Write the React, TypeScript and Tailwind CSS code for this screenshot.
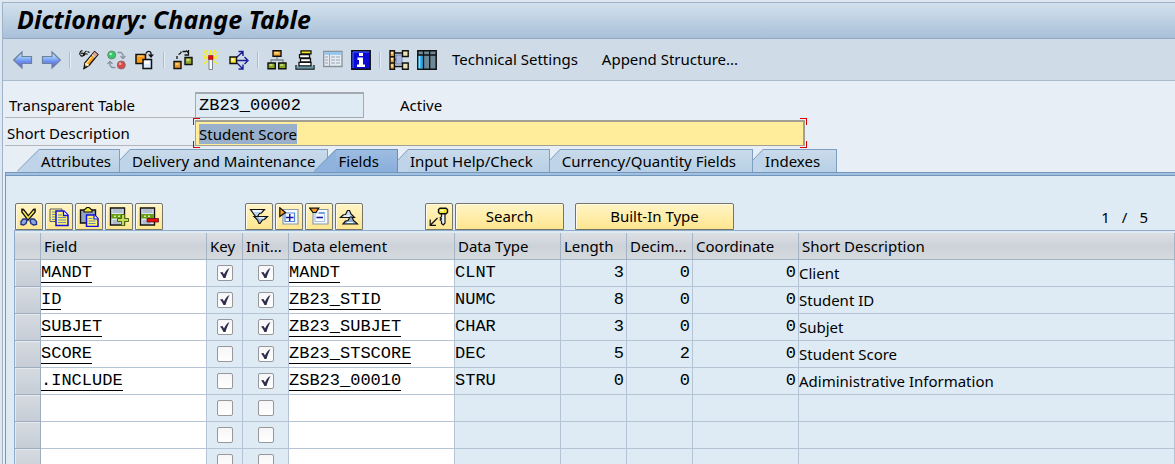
import { useEffect, useRef, type ReactNode } from "react";

function Icon({ children, className = "" }: { children: ReactNode; className?: string }) {
  return (
    <svg viewBox="0 0 20 20" className={`h-5 w-5 shrink-0 ${className}`} fill="none" aria-hidden="true">
      {children}
    </svg>
  );
}

const BackIcon = () => (
  <Icon>
    <defs>
      <linearGradient id="arrow" x1="0" y1="0" x2="0" y2="1">
        <stop offset="0.2" stopColor="#a8e0fb" />
        <stop offset="0.6" stopColor="#6c8df0" />
        <stop offset="1" stopColor="#5a66e4" />
      </linearGradient>
    </defs>
    <path d="M.7 10 9 2v4.500h9.500v7H9V18z" fill="url(#arrow)" stroke="#6f7f9c" strokeWidth="1.200" />
  </Icon>
);

const ForwardIcon = () => (
  <Icon>
    <path d="M19.300 10 11 2v4.500H1.500v7H11V18z" fill="url(#arrow)" stroke="#6f7f9c" strokeWidth="1.200" />
  </Icon>
);

const DisplayChangeIcon = () => (
  <Icon>
    <path d="M3.500.7C1.500 1 .5 2.500 1 5M2 3.500c1.500-1 3 0 2.500 1.500S2 6.500 1.500 5M5 4c.5-1 1-2.500 2.500-3M5 6c0-2 2.500-3 3.500-1.500M8.500 1.500l2 1" stroke="#111" strokeWidth="1.200" />
    <path d="M15.500 1.500 19 4.500 10 15.500 5 18.500l.8-5.500z" fill="#f8a020" stroke="#111" strokeWidth="1.200" />
    <path d="M14 3.200 15.600 1.800 18.600 4.400 17.300 6z" fill="#e9a0a0" />
    <path d="M13 4.500 16.300 7.200" stroke="#c8d4f0" strokeWidth="1.500" />
    <path d="M12.500 7 7.500 13.200" stroke="#ffe08a" strokeWidth="1.300" />
    <path d="M6.200 13.500 9.500 15.500" stroke="#fff" strokeWidth="1.500" />
    <path d="M5.500 16 8 17.200 4.500 19z" fill="#111" />
  </Icon>
);

const ActiveInactiveIcon = () => (
  <Icon>
    <circle cx="4.700" cy="5" r="4" fill="#35c968" stroke="#648d75" />
    <circle cx="3.700" cy="4" r="1.300" fill="#a9f3c2" />
    <circle cx="14.300" cy="15" r="4" fill="#d84c4c" stroke="#9a6666" />
    <circle cx="13.200" cy="13.800" r="1.300" fill="#f5b0a8" />
    <path d="M10.500 2.500H14l2 2V8M13.500 6 16 8.500 18.500 6" stroke="#87939e" strokeWidth="1.300" />
    <path d="M8.500 17.500H5l-2-2V12M.5 14 3 11.500 5.500 14" stroke="#87939e" strokeWidth="1.300" />
  </Icon>
);

const OtherObjectIcon = () => (
  <Icon>
    <path d="M1 4.500h9.500v9H1z" fill="#fb9a14" stroke="#111" strokeWidth="1.500" />
    <path d="M2.500 6h6" stroke="#ffd080" />
    <path d="M8 9.500h8.500v9H8z" fill="#dceaff" stroke="#111" strokeWidth="1.500" />
    <path d="M9.500 11h5v3h-5z" fill="#fff" />
    <path d="M11 3.500C12 1 15 .5 16 3v3" stroke="#111" strokeWidth="1.300" />
    <path d="M13 4.500h6L16 8z" fill="#111" />
  </Icon>
);

const CheckObjectIcon = () => (
  <Icon>
    <path d="M1 11.500h7v7H1z" fill="#ef9624" stroke="#111" strokeWidth="1.400" />
    <path d="M2.500 13h3v2h-3z" fill="#ffd27a" />
    <path d="M12 7.500h7v7h-7z" fill="#97a831" stroke="#111" strokeWidth="1.400" />
    <path d="M13.500 9h3v2h-3z" fill="#d2dd8a" />
    <path d="M4 9V6M5.500 4.500 8 3M8 3V1.500M9.500 1.500H13M13 .5l2.500 2.500M15.500 0v5h-4" stroke="#111" strokeWidth="1.300" />
  </Icon>
);

const ActivateIcon = () => (
  <Icon>
    <path d="M9.500 0v5M2.500 1.500 7 5.500M16.500 1.500 12 5.500M2 8h5M12 8h5M3 14l4-4M16 14l-4-4M5 0l2 3.500M14 0l-2 3.500M1.500 5.500 6 7M17.500 5.500 13 7" stroke="#f6ee25" strokeWidth="1.300" />
    <path d="M8 8h3.500v11.500H8z" fill="#f7f9fb" stroke="#7a8690" />
    <path d="M7.500 5.500h4.500v4H7.500z" fill="#e80d0d" stroke="#9b1010" strokeWidth=".6" />
  </Icon>
);

const WhereUsedIcon = () => (
  <Icon>
    <path d="M7.500 7.500 13.500 2M7.500 10.500H18M7.500 12.500 13.500 18.500M9.500 1.500h4.500V6M9.500 19h4.500v-4.500M15.500 7l3.500 3.500-3.500 3.500" stroke="#1c1c96" strokeWidth="1.400" />
    <path d="M1 7h6.500v6.500H1z" fill="#f7e92a" stroke="#111" strokeWidth="1.400" />
    <path d="M2.500 8.500h2v2h-2z" fill="#fff" />
  </Icon>
);

const HierarchyIcon = () => (
  <Icon>
    <path d="M10 6v4M4 12.500V10h12v2.500" stroke="#7b8791" strokeWidth="1.300" />
    <path d="M6 .7h8v5.600H6z" fill="#f7a92c" stroke="#111" strokeWidth="1.400" />
    <path d="M7.500 2h4v1.500h-4z" fill="#ffe196" />
    <path d="M1 13h7.300v5.700H1zM11.700 13H19v5.700h-7.300z" fill="#88a622" stroke="#111" strokeWidth="1.400" />
    <path d="M2.500 14.300h3v1.500h-3zM13.200 14.300h3v1.500h-3z" fill="#d3e28a" />
  </Icon>
);

const StackIcon = () => (
  <Icon>
    <path d="M1 15v4h18v-4" fill="#9fc4d2" stroke="#111" strokeWidth="1.300" />
    <path d="M1.500 17.500h17" stroke="#6599ab" strokeWidth="2" />
    <path d="M4 12.300h12v3.500H4z" fill="#fff" stroke="#111" strokeWidth="1.300" />
    <path d="M5.500 8.500h10v3.300h-10z" fill="#fff" stroke="#111" strokeWidth="1.300" />
    <path d="M4.500 4.600h10v3.300h-10z" fill="#fff" stroke="#111" strokeWidth="1.300" />
    <path d="M6 .9h10v3H6z" fill="#f6e51e" stroke="#111" strokeWidth="1.300" />
  </Icon>
);

const ContentsIcon = () => (
  <Icon>
    <path d="M.7 1.500h18.300v15H.7z" fill="#e6ebf1" stroke="#87929d" strokeWidth="1.300" />
    <path d="M1.500 3.500h17" stroke="#8cc4f0" strokeWidth="2.500" />
    <path d="M6.500 4v12" stroke="#9ca8b4" />
    <path d="M2 7h3M2 10h3M2 13h3M8 7h4M13 7h4M8 10h4M13 10h4M8 13h4M13 13h4" stroke="#b4bcc5" strokeWidth="1.500" />
  </Icon>
);

const InfoIcon = () => (
  <Icon>
    <path d="M.8.800h18.400v18.400H.8z" fill="#0b0bd6" stroke="#111" strokeWidth="1.500" />
    <path d="M2 18V2h16" stroke="#4a6bff" />
    <path d="M8 3h4v3H8zM6.500 7.500H12v7h2V17H6v-2.500h2V10H6.500z" fill="#fff" />
  </Icon>
);

const RelationIcon = () => (
  <Icon>
    <path d="M4 3h10M4 16.500h10M5 9.500h4" stroke="#111" strokeWidth="1.500" />
    <path d="M7 5h6v9H7z" fill="#a6b9dc" stroke="#7285a8" />
    <path d="M1 .8h4.500v18.400H1z" fill="#efa73f" stroke="#111" strokeWidth="1.400" />
    <path d="M1 6.800h4.500M1 13h4.500" stroke="#111" strokeWidth="1.400" />
    <path d="M2 2h2v2H2zM2 8h2v2H2zM2 14.500h2v2H2z" fill="#ffe3a0" />
    <path d="M13.500.8h5.700v5.700h-5.700zM13.500 13h5.700v6.200h-5.700z" fill="#eae3b6" stroke="#111" strokeWidth="1.400" />
  </Icon>
);

const TableIcon = () => (
  <Icon>
    <path d="M.8.800h18.400v18.400H.8z" fill="#6d8997" stroke="#111" strokeWidth="1.500" />
    <path d="M1.500 5H6v13.500H1.500z" fill="#27a8e8" />
    <path d="M2.500 5v13" stroke="#8fe0ff" strokeWidth="1.500" />
    <path d="M6.500 1v18M12.700 1v18M1 5h18" stroke="#111" strokeWidth="1.300" />
  </Icon>
);

const CutIcon = () => (
  <Icon>
    <path d="M3 1.500V5l6.500 8.500M16 1.500V5L8.500 13.500M4 2l7 9M15 2 8 11" stroke="#111" strokeWidth="1.600" />
    <path d="M4 4l5.500 7.500M15 4 9.500 10.500" stroke="#f5e93a" strokeWidth="1.400" />
    <path d="M2 14.500 4 12h3l1 1.500-1 3L4.500 18 2 17.500zM11 13.500l1-1.500h3l2.500 2.500v3L14.500 18 12 16.500z" fill="#8fa6d8" stroke="#22338c" strokeWidth="1.400" />
  </Icon>
);

const CopyIcon = () => (
  <Icon>
    <path d="M1 2h12v12.500H1z" fill="#fff16a" stroke="#55617c" />
    <path d="M3 5h4M3 7.500h4M3 10h4M3 12.500h4" stroke="#6a88b4" />
    <path d="M7 4h8l4 4v10.500H7z" fill="#fff16a" stroke="#1010e0" strokeWidth="1.500" />
    <path d="M14.500 4v4.500H19" fill="#fff" stroke="#1010e0" strokeWidth="1.300" />
    <path d="M9 8h4M9 10.500h8M9 13h8M9 15.500h8" stroke="#6a88b4" />
  </Icon>
);

const PasteIcon = () => (
  <Icon>
    <path d="M1.500 3h15v13h-15z" fill="#96a4be" stroke="#111" strokeWidth="1.400" />
    <path d="M5 5V3l3-2.500h2L13 3v2z" fill="#f4e530" stroke="#111" strokeWidth="1.200" />
    <path d="M7.500 8h8l3.500 3.500v8H7.500z" fill="#fff16a" stroke="#1010e0" strokeWidth="1.500" />
    <path d="M15 8v4h4" fill="#fff" stroke="#1010e0" strokeWidth="1.200" />
    <path d="M9.500 11.500h4M9.500 14h7M9.500 16.500h7" stroke="#6a88b4" />
  </Icon>
);

const ListBody = () => (
  <>
    <path d="M1.500 1h14v17h-14z" fill="#dfe6ef" stroke="#111" strokeWidth="1.400" />
    <path d="M3.500 3h10M3.500 5h10M3.500 14h8M3.500 16h8" stroke="#8492b0" strokeWidth="1.200" />
    <path d="M2.200 7h12.600v4.500H2.200z" fill="#679d12" />
    <path d="M5 9.200h2M9 9.200h2" stroke="#d4ec9a" strokeWidth="1.600" />
  </>
);

const InsertRowIcon = () => (
  <Icon>
    <ListBody />
    <path d="M12.500 7.500h3v4h4v3h-4v4h-3v-4h-4v-3h4z" fill="#c3dc5b" stroke="#4e6512" />
  </Icon>
);

const DeleteRowIcon = () => (
  <Icon>
    <ListBody />
    <path d="M8 11.500h11.500V15H8z" fill="#e90d0d" stroke="#5c1010" strokeWidth=".8" />
  </Icon>
);

const ExpandAllIcon = () => (
  <Icon>
    <path d="M5 9.500h13.500l-3 3-2 .5-2.500 3.500H10L8.500 13z" fill="#9bbcdd" stroke="#111" strokeWidth="1.200" />
    <path d="M1.500 2.500h14l-3 3.500-2 .5L8.500 9.500h-2z" fill="#b9d4ee" stroke="#111" strokeWidth="1.200" />
    <path d="M4 4h8.500M10 10.800h5" stroke="#fff" strokeWidth="1.300" />
  </Icon>
);

const ExpandNodeIcon = () => (
  <Icon>
    <path d="M4 2.500h15v14.500H4z" fill="#f7fbff" stroke="#8b98a8" strokeWidth="1.200" />
    <path d="M6 6h9.500v8.500H6z" fill="#fff" stroke="#4c86d8" strokeWidth="1.200" />
    <path d="M7 10.500h7.500M10.700 7v7" stroke="#1515a0" strokeWidth="1.500" />
    <path d="M.8.800 6.500 5.500.8 9.500z" fill="#f59b1f" stroke="#111" strokeWidth="1.200" />
  </Icon>
);

const CollapseNodeIcon = () => (
  <Icon>
    <path d="M4 2.500h15v14.500H4z" fill="#f7fbff" stroke="#8b98a8" strokeWidth="1.200" />
    <path d="M6 6h9.500v8.500H6z" fill="#fff" stroke="#a5c4ea" strokeWidth="1.200" />
    <path d="M10 6h5.500" stroke="#4c86d8" strokeWidth="1.400" />
    <path d="M7.500 10.500h6.500" stroke="#1515a0" strokeWidth="1.600" />
    <path d="M.8 1.200h9L7 5.500H4z" fill="#f59b1f" stroke="#111" strokeWidth="1.200" />
  </Icon>
);

const CollapseAllIcon = () => (
  <Icon>
    <path d="M1.500 10.500 4 8l2.500-.5L8.500 3.500h2l1.500 3.500 3.500 3.500z" fill="#c6dcf2" stroke="#111" strokeWidth="1.200" />
    <path d="M4 17l2.500-3 2.500-.5 2-3.500h2l1.500 3.500 4 3.500z" fill="#8fb2d8" stroke="#111" strokeWidth="1.200" />
    <path d="M5 9h6M8 15.500h6" stroke="#fff" strokeWidth="1.200" />
  </Icon>
);

const KeyIcon = () => (
  <Icon>
    <path d="M12.500 6.500h3.500v9.500L14.300 18l-1.800-1.500V14l-1.300-1 1.300-1-1.300-1.200 1.300-1z" fill="#eef2f8" stroke="#111" strokeWidth="1.200" />
    <path d="M11 1.200h6L18.500 2.500v3L17 6.800h-6L9.500 5.500v-3z" fill="#f6e52a" stroke="#111" strokeWidth="1.400" />
    <path d="M11.500 3.500h3" stroke="#fff" strokeWidth="1.500" />
    <path d="M8.500 11 1.500 18M1.200 12.500v5.800H7" stroke="#111" strokeWidth="1.200" />
  </Icon>
);

const toolGroups = [
  [
    ["Back", BackIcon],
    ["Forward", ForwardIcon],
  ],
  [
    ["Display / Change", DisplayChangeIcon],
    ["Active / Inactive", ActiveInactiveIcon],
    ["Other Object", OtherObjectIcon],
  ],
  [
    ["Check", CheckObjectIcon],
    ["Activate", ActivateIcon],
    ["Where-Used List", WhereUsedIcon],
  ],
  [
    ["Display Object List", HierarchyIcon],
    ["Display Navigation Window", StackIcon],
    ["Contents", ContentsIcon],
    ["Help", InfoIcon],
  ],
  [
    ["Graphic", RelationIcon],
    ["Table View", TableIcon],
  ],
] as const;

function Toolbar() {
  return (
    <div className="flex h-[42px] items-center gap-2 border-b border-[#a9bccf] bg-[#cfdce7] pl-2.5">
      {toolGroups.map((group, g) => (
        <div key={g} className="flex items-center gap-2">
          {g > 0 && <span className="h-4 w-0.5 border-l border-[#9dbde0] bg-[#e4eef7]" />}
          {group.map(([label, Glyph]) => (
            <button key={label} type="button" aria-label={label} className="block">
              <Glyph />
            </button>
          ))}
        </div>
      ))}
      <button type="button" className="ml-[7px]">Technical Settings</button>
      <button type="button" className="ml-4">Append Structure...</button>
    </div>
  );
}

function Corners() {
  return (
    <>
      <span className="absolute -left-0.5 -top-0.5 h-[7px] w-[7px] border-l border-t border-[#e00000]" />
      <span className="absolute -bottom-0.5 -left-0.5 h-[7px] w-[7px] border-b border-l border-[#e00000]" />
      <span className="absolute -right-0.5 -top-0.5 h-[7px] w-[7px] border-r border-t border-[#e00000]" />
      <span className="absolute -bottom-0.5 -right-0.5 h-[7px] w-[7px] border-b border-r border-[#e00000]" />
    </>
  );
}

function HeaderForm() {
  const description = useRef<HTMLInputElement>(null);
  useEffect(() => {
    description.current?.focus();
    description.current?.select();
  }, []);
  return (
    <form className="flex flex-col gap-0.5 pl-0.5 pt-[11px]">
      <div className="flex h-[26px]">
        <label htmlFor="table-name" className="w-[190px] border-b border-[#b3b7bb] pl-1 leading-[26px]">
          Transparent Table
        </label>
        <input
          id="table-name"
          readOnly
          value="ZB23_00002"
          className="w-[169px] border border-t-2 border-[#a2a9b0] bg-[#deebf4] pl-[3px] font-['Liberation_Mono',monospace] text-[17px] outline-none"
        />
        <span className="ml-9 leading-[26px]">Active</span>
      </div>
      <div className="flex h-[26px]">
        <label htmlFor="short-text" className="w-[190px] border-b border-[#b3b7bb] pl-0.5 leading-[26px]">
          Short Description
        </label>
        <div className="relative w-[610px]">
          <input
            id="short-text"
            ref={description}
            defaultValue="Student Score"
            className="h-full w-full border border-r-2 border-t-2 border-[#a2a094] bg-[#ffed9c] pl-[3px] outline-none selection:bg-[#98b0cc] selection:text-black"
          />
          <Corners />
        </div>
      </div>
    </form>
  );
}

const tabs = [
  { label: "Attributes", space: "pr-2" },
  { label: "Delivery and Maintenance", space: "pr-3" },
  { label: "Fields", space: "pr-[18px]" },
  { label: "Input Help/Check", space: "pr-4" },
  { label: "Currency/Quantity Fields", space: "pr-4" },
  { label: "Indexes", space: "pr-4" },
];

function Tab({ label, space, index }: { label: string; space: string; index: number }) {
  const active = label === "Fields";
  const wide = active || index === 0;
  return (
    <button
      type="button"
      role="tab"
      aria-selected={active}
      className={`flex h-[23px] ${active ? "relative -ml-3.5" : ""}`}
    >
      <svg
        viewBox={wide ? "0 0 22 23" : "0 0 10 23"}
        className={wide ? "h-[23px] w-[22px]" : "h-[23px] w-2.5"}
        fill={active ? "#90b3dd" : "#bfd4e8"}
        aria-hidden="true"
      >
        <path d={wide ? "M0 23 22 0v23z" : "M0 11 10 0v23H0z"} />
        <path d={wide ? "M0 22.500 22 .5" : "M0 11 10 .5"} stroke={active ? "#6a90ba" : "#7f9fc0"} fill="none" />
      </svg>
      <span
        className={`h-[23px] border-r border-t pl-0.5 leading-[22px] ${space} ${
          active
            ? "border-[#6a90ba] bg-linear-to-b from-[#9dbce1] to-[#89aedb]"
            : "border-[#7f9fc0] bg-linear-to-b from-[#c9dbeb] to-[#b7cfe5]"
        }`}
      >
        {label}
      </span>
    </button>
  );
}

function YellowButton({ label, children, className = "w-7" }: { label?: string; children: ReactNode; className?: string }) {
  return (
    <button
      type="button"
      aria-label={label}
      className={`flex h-[27px] items-center justify-center rounded-t-[2px] border border-[#77756a] bg-linear-to-b from-[#fff4c4] to-[#fee68f] shadow-[inset_1px_1px_0_#fffbe6] ${className}`}
    >
      {children}
    </button>
  );
}

function TableActions() {
  return (
    <div className="flex h-[27px] gap-0.5 pl-px">
      <YellowButton label="Cut"><CutIcon /></YellowButton>
      <YellowButton label="Copy"><CopyIcon /></YellowButton>
      <YellowButton label="Paste"><PasteIcon /></YellowButton>
      <YellowButton label="Insert Row"><InsertRowIcon /></YellowButton>
      <YellowButton label="Delete Row"><DeleteRowIcon /></YellowButton>
      <div className="ml-20 flex gap-0.5">
        <YellowButton label="Expand All"><ExpandAllIcon /></YellowButton>
        <YellowButton label="Expand Include"><ExpandNodeIcon /></YellowButton>
        <YellowButton label="Collapse Include"><CollapseNodeIcon /></YellowButton>
        <YellowButton label="Collapse All"><CollapseAllIcon /></YellowButton>
      </div>
      <div className="ml-[60px] flex gap-0.5">
        <YellowButton label="Foreign Keys"><KeyIcon /></YellowButton>
        <YellowButton className="w-[109px]">Search</YellowButton>
      </div>
      <YellowButton className="ml-[9px] w-[159px]">Built-In Type</YellowButton>
      <div className="ml-auto flex gap-3 pr-[27px] leading-7">
        <span>1</span>
        <span>/</span>
        <span>5</span>
      </div>
    </div>
  );
}

type Row = {
  field: string;
  key: boolean;
  init: boolean;
  element: string;
  type: string;
  length: string;
  decimals: string;
  coordinate: string;
  text: string;
};

const blank: Row = { field: "", key: false, init: false, element: "", type: "", length: "", decimals: "", coordinate: "", text: "" };

const rows: Row[] = [
  { field: "MANDT", key: true, init: true, element: "MANDT", type: "CLNT", length: "3", decimals: "0", coordinate: "0", text: "Client" },
  { field: "ID", key: true, init: true, element: "ZB23_STID", type: "NUMC", length: "8", decimals: "0", coordinate: "0", text: "Student ID" },
  { field: "SUBJET", key: true, init: true, element: "ZB23_SUBJET", type: "CHAR", length: "3", decimals: "0", coordinate: "0", text: "Subjet" },
  { field: "SCORE", key: false, init: true, element: "ZB23_STSCORE", type: "DEC", length: "5", decimals: "2", coordinate: "0", text: "Student Score" },
  { field: ".INCLUDE", key: false, init: true, element: "ZSB23_00010", type: "STRU", length: "0", decimals: "0", coordinate: "0", text: "Adiministrative Information" },
  blank,
  blank,
  blank,
];

function Tick({ label, checked }: { label: string; checked: boolean }) {
  return (
    <span className="relative mx-auto block h-4 w-4">
      <input
        type="checkbox"
        aria-label={label}
        defaultChecked={checked}
        className="peer block h-4 w-4 appearance-none rounded-[2px] border border-[#98989a] bg-linear-to-b from-[#f6f6f8] to-white"
      />
      <svg viewBox="0 0 16 16" className="pointer-events-none absolute inset-0 hidden h-4 w-4 peer-checked:block" aria-hidden="true">
        <path d="M3 7.500 5.500 7 7 9.500C8 7 9.500 4.500 12.500 3c-1.500 3-3 6-4 10H6.500C5.500 11 4.500 9 3 7.500z" fill="#2c2c4c" />
      </svg>
    </span>
  );
}

const columns = [
  ["", "w-[26px]"],
  ["Field", "w-[166px]"],
  ["Key", "w-9"],
  ["Init...", "w-[46px]"],
  ["Data element", "w-[166px]"],
  ["Data Type", "w-[106px]"],
  ["Length", "w-[66px]"],
  ["Decim...", "w-[66px]"],
  ["Coordinate", "w-[106px]"],
  ["Short Description", ""],
] as const;

const cell = "h-[27px] border-b border-r border-[#b4c4d5] p-0";
const mono = "font-['Liberation_Mono',monospace] text-[17px]";
const link = "block w-fit border-b border-black leading-[19px]";

function FieldTable() {
  return (
    <table className="w-full table-fixed border-separate border-spacing-0">
      <thead>
        <tr>
          {columns.map(([name, width], i) => (
            <th
              key={i}
              scope="col"
              className={`h-[27px] overflow-hidden whitespace-nowrap border-b border-r border-[#a3b3c3] bg-linear-to-b from-[#dce0e4] via-[#cdd2da] to-[#d5dadd] p-0 pl-[3px] text-left font-normal ${width}`}
            >
              {name}
            </th>
          ))}
        </tr>
      </thead>
      <tbody>
        {rows.map((row, i) => (
          <tr key={i}>
            <td className="h-[27px] border-b border-r border-[#9eadbf] bg-linear-to-b from-[#d6dbe1] to-[#c6cdd6] p-0 shadow-[inset_1px_1px_0_#e6eaee]" />
            <td className={`${cell} ${mono} bg-white`}>{row.field && <a href="#field" className={link}>{row.field}</a>}</td>
            <td className={cell}><Tick label={`Key, row ${i + 1}`} checked={row.key} /></td>
            <td className={cell}><Tick label={`Initial value, row ${i + 1}`} checked={row.init} /></td>
            <td className={`${cell} ${mono} bg-white`}>{row.element && <a href="#element" className={link}>{row.element}</a>}</td>
            <td className={`${cell} ${mono}`}>{row.type}</td>
            <td className={`${cell} ${mono} pr-0.5 text-right`}>{row.length}</td>
            <td className={`${cell} ${mono} pr-0.5 text-right`}>{row.decimals}</td>
            <td className={`${cell} ${mono} pr-0.5 text-right`}>{row.coordinate}</td>
            <td className={`${cell} whitespace-nowrap`}>{row.text}</td>
          </tr>
        ))}
      </tbody>
    </table>
  );
}

export default function App() {
  return (
    <div className="h-screen overflow-hidden bg-[#dfe8f1] pl-0.5 pt-0.5 font-['Noto_Sans',sans-serif] text-[15px] text-black">
      <main className="flex h-full flex-col border-l border-t border-[#9fb3c8] bg-[#e7eef6]">
        <h1 className="h-9 border-b border-[#8fa9c4] bg-linear-to-b from-[#d3e1ec] to-[#a9c0d9] pl-3.5 text-[25px] font-bold italic leading-[32px]">
          Dictionary: Change Table
        </h1>
        <Toolbar />
        <HeaderForm />
        <div role="tablist" className="mt-[3px] flex pl-3.5">
          {tabs.map((tab, index) => (
            <Tab key={tab.label} label={tab.label} space={tab.space} index={index} />
          ))}
        </div>
        <section className="ml-0.5 flex min-h-0 flex-1 flex-col border-l border-t border-[#7397bd] bg-[#deebf4]">
          <div className="h-0.5 shrink-0 bg-[#a3c0df]" />
          <div className="flex min-h-0 flex-1 flex-col border-t border-[#6f96bf] pl-2 pt-[27px]">
            <TableActions />
            <div className="min-h-0 flex-1 overflow-hidden border-l border-t border-[#8eacc9] pt-0.5">
              <FieldTable />
            </div>
          </div>
        </section>
      </main>
    </div>
  );
}
